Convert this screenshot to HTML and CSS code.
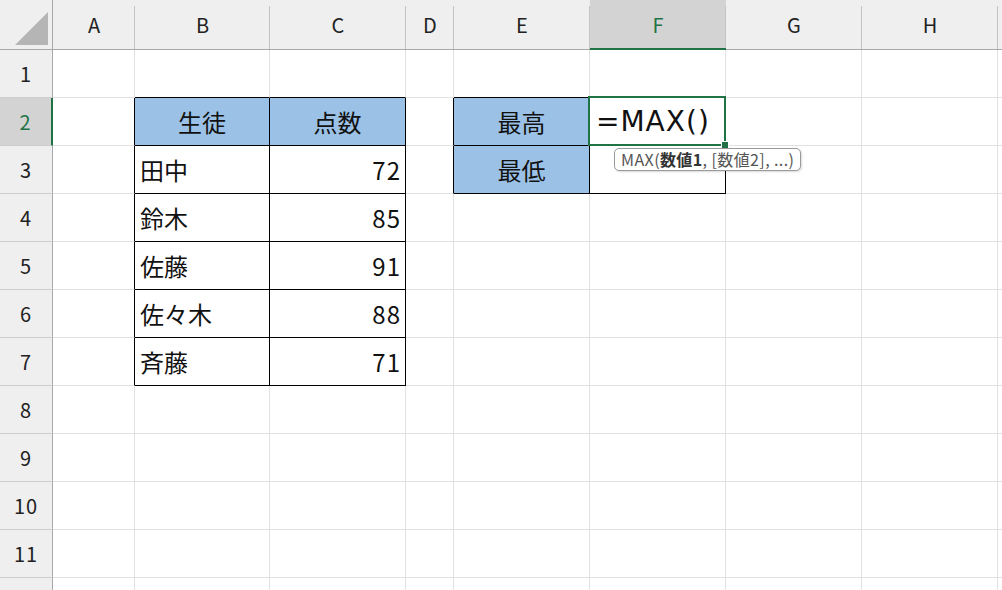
FILE: index.html
```html
<!DOCTYPE html>
<html lang="ja">
<head>
    <meta charset="UTF-8">
    <meta name="viewport" content="width=device-width, initial-scale=1.0">
    <title>Book1 - Excel</title>
    <link rel="stylesheet" href="styles.css">
</head>
<body>
    <div class="sheet">
        <!-- column headers -->
        <div class="corner"><span class="corner-tri"></span></div>
        <div class="col-head">A</div>
        <div class="col-head">B</div>
        <div class="col-head">C</div>
        <div class="col-head">D</div>
        <div class="col-head">E</div>
        <div class="col-head sel">F</div>
        <div class="col-head">G</div>
        <div class="col-head">H</div>
        <div class="col-head"></div>

        <!-- row 1 -->
        <div class="row-head">1</div>
        <div class="cell"></div>
        <div class="cell tb-above"></div>
        <div class="cell tb-above"></div>
        <div class="cell"></div>
        <div class="cell tb-above"></div>
        <div class="cell tb-above"></div>
        <div class="cell"></div>
        <div class="cell"></div>
        <div class="cell"></div>

        <!-- row 2 -->
        <div class="row-head sel">2</div>
        <div class="cell tb-before"></div>
        <div class="cell tb fill center">生徒</div>
        <div class="cell tb fill center">点数</div>
        <div class="cell tb-before"></div>
        <div class="cell tb fill center">最高</div>
        <div class="cell tb active">
            <span class="formula">=MAX()</span>
            <span class="handle"></span>
            <div class="tip">MAX(<b>数値1</b>, [数値2], ...)</div>
        </div>
        <div class="cell"></div>
        <div class="cell"></div>
        <div class="cell"></div>

        <!-- row 3 -->
        <div class="row-head">3</div>
        <div class="cell tb-before"></div>
        <div class="cell tb">田中</div>
        <div class="cell tb num">72</div>
        <div class="cell tb-before"></div>
        <div class="cell tb fill center">最低</div>
        <div class="cell tb"></div>
        <div class="cell"></div>
        <div class="cell"></div>
        <div class="cell"></div>

        <!-- row 4 -->
        <div class="row-head">4</div>
        <div class="cell tb-before"></div>
        <div class="cell tb">鈴木</div>
        <div class="cell tb num">85</div>
        <div class="cell"></div>
        <div class="cell"></div>
        <div class="cell"></div>
        <div class="cell"></div>
        <div class="cell"></div>
        <div class="cell"></div>

        <!-- row 5 -->
        <div class="row-head">5</div>
        <div class="cell tb-before"></div>
        <div class="cell tb">佐藤</div>
        <div class="cell tb num">91</div>
        <div class="cell"></div>
        <div class="cell"></div>
        <div class="cell"></div>
        <div class="cell"></div>
        <div class="cell"></div>
        <div class="cell"></div>

        <!-- row 6 -->
        <div class="row-head">6</div>
        <div class="cell tb-before"></div>
        <div class="cell tb">佐々木</div>
        <div class="cell tb num">88</div>
        <div class="cell"></div>
        <div class="cell"></div>
        <div class="cell"></div>
        <div class="cell"></div>
        <div class="cell"></div>
        <div class="cell"></div>

        <!-- row 7 -->
        <div class="row-head">7</div>
        <div class="cell tb-before"></div>
        <div class="cell tb">斉藤</div>
        <div class="cell tb num">71</div>
        <div class="cell"></div>
        <div class="cell"></div>
        <div class="cell"></div>
        <div class="cell"></div>
        <div class="cell"></div>
        <div class="cell"></div>

        <!-- rows 8-12 are empty -->
        <div class="row-head">8</div>
        <div class="cell"></div><div class="cell"></div><div class="cell"></div><div class="cell"></div><div class="cell"></div><div class="cell"></div><div class="cell"></div><div class="cell"></div><div class="cell"></div>
        <div class="row-head">9</div>
        <div class="cell"></div><div class="cell"></div><div class="cell"></div><div class="cell"></div><div class="cell"></div><div class="cell"></div><div class="cell"></div><div class="cell"></div><div class="cell"></div>
        <div class="row-head">10</div>
        <div class="cell"></div><div class="cell"></div><div class="cell"></div><div class="cell"></div><div class="cell"></div><div class="cell"></div><div class="cell"></div><div class="cell"></div><div class="cell"></div>
        <div class="row-head">11</div>
        <div class="cell"></div><div class="cell"></div><div class="cell"></div><div class="cell"></div><div class="cell"></div><div class="cell"></div><div class="cell"></div><div class="cell"></div><div class="cell"></div>
        <div class="row-head"></div>
        <div class="cell"></div><div class="cell"></div><div class="cell"></div><div class="cell"></div><div class="cell"></div><div class="cell"></div><div class="cell"></div><div class="cell"></div><div class="cell"></div>
    </div>
</body>
</html>
```

FILE: styles.css
```css
body {
    margin: 0;
    padding: 0;
    background-color: #fff;
    overflow: hidden;
    font-family: "Noto Sans CJK JP", "Noto Sans", sans-serif;
    color: #111;
}
.sheet {
    display: grid;
    grid-template-columns: 53px 82px 135px 136px 48px 136px 136px 136px 136px 40px;
    grid-template-rows: 50px repeat(12, 48px);
}

/* headers */
.corner {
    position: relative;
    background-color: #efefef;
    border-right: 1px solid #a8a8a8;
    border-bottom: 1px solid #a8a8a8;
}
.corner-tri {
    position: absolute;
    right: 4px;
    bottom: 4px;
    width: 0;
    height: 0;
    border-left: 33px solid transparent;
    border-bottom: 33px solid #b5b5b5;
}
.col-head {
    position: relative;
    display: flex;
    align-items: center;
    justify-content: center;
    background-color: #efefef;
    border-bottom: 1px solid #a8a8a8;
    font-size: 20px;
    color: #222;
}
.col-head::after {
    content: "";
    position: absolute;
    right: 0;
    top: 6px;
    bottom: 0;
    width: 1px;
    background-color: #c4c4c4;
}
.col-head.sel {
    background-color: #d3d3d3;
    color: #217346;
    border-bottom: 2px solid #217346;
}
.row-head {
    display: flex;
    align-items: center;
    justify-content: center;
    background-color: #efefef;
    border-right: 1px solid #a8a8a8;
    border-bottom: 1px solid #cdcdcd;
    font-size: 20px;
    letter-spacing: 1px;
    color: #222;
}
.row-head.sel {
    background-color: #d3d3d3;
    color: #217346;
    border-right: 2px solid #217346;
}

/* cells */
.cell {
    position: relative;
    display: flex;
    align-items: center;
    padding: 0 5px;
    border-right: 1px solid #e1e1e1;
    border-bottom: 1px solid #e1e1e1;
    font-size: 24px;
    white-space: nowrap;
}
.center {
    justify-content: center;
}
.num {
    justify-content: flex-end;
    padding-right: 4px;
    letter-spacing: 1px;
}
.fill {
    background-color: #9bc2e6;
}
.tb {
    border-right-color: #000;
    border-bottom-color: #000;
}
.tb-above {
    border-bottom-color: #000;
}
.tb-before {
    border-right-color: #000;
}

/* active cell with formula being typed */
.active::before {
    content: "";
    position: absolute;
    left: -2px;
    top: -2px;
    right: -1px;
    bottom: -1px;
    border: 2px solid #217346;
}
.formula {
    font-family: "DejaVu Sans", sans-serif;
    font-size: 28px;
    letter-spacing: 1px;
    padding-left: 1px;
}
.handle {
    position: absolute;
    right: -4px;
    bottom: -4px;
    width: 6px;
    height: 6px;
    background-color: #217346;
    border: 1px solid #fff;
    z-index: 2;
}
.tip {
    position: absolute;
    left: 24px;
    top: 50px;
    z-index: 3;
    padding: 0 6px;
    height: 21px;
    line-height: 20px;
    background-color: #fff;
    border: 1px solid #9a9a9a;
    border-radius: 5px;
    box-shadow: 1px 1px 2px rgba(0, 0, 0, 0.15);
    font-size: 16px;
    letter-spacing: 0.4px;
    color: #555;
}
.tip b {
    font-weight: bold;
    color: #333;
}
```
